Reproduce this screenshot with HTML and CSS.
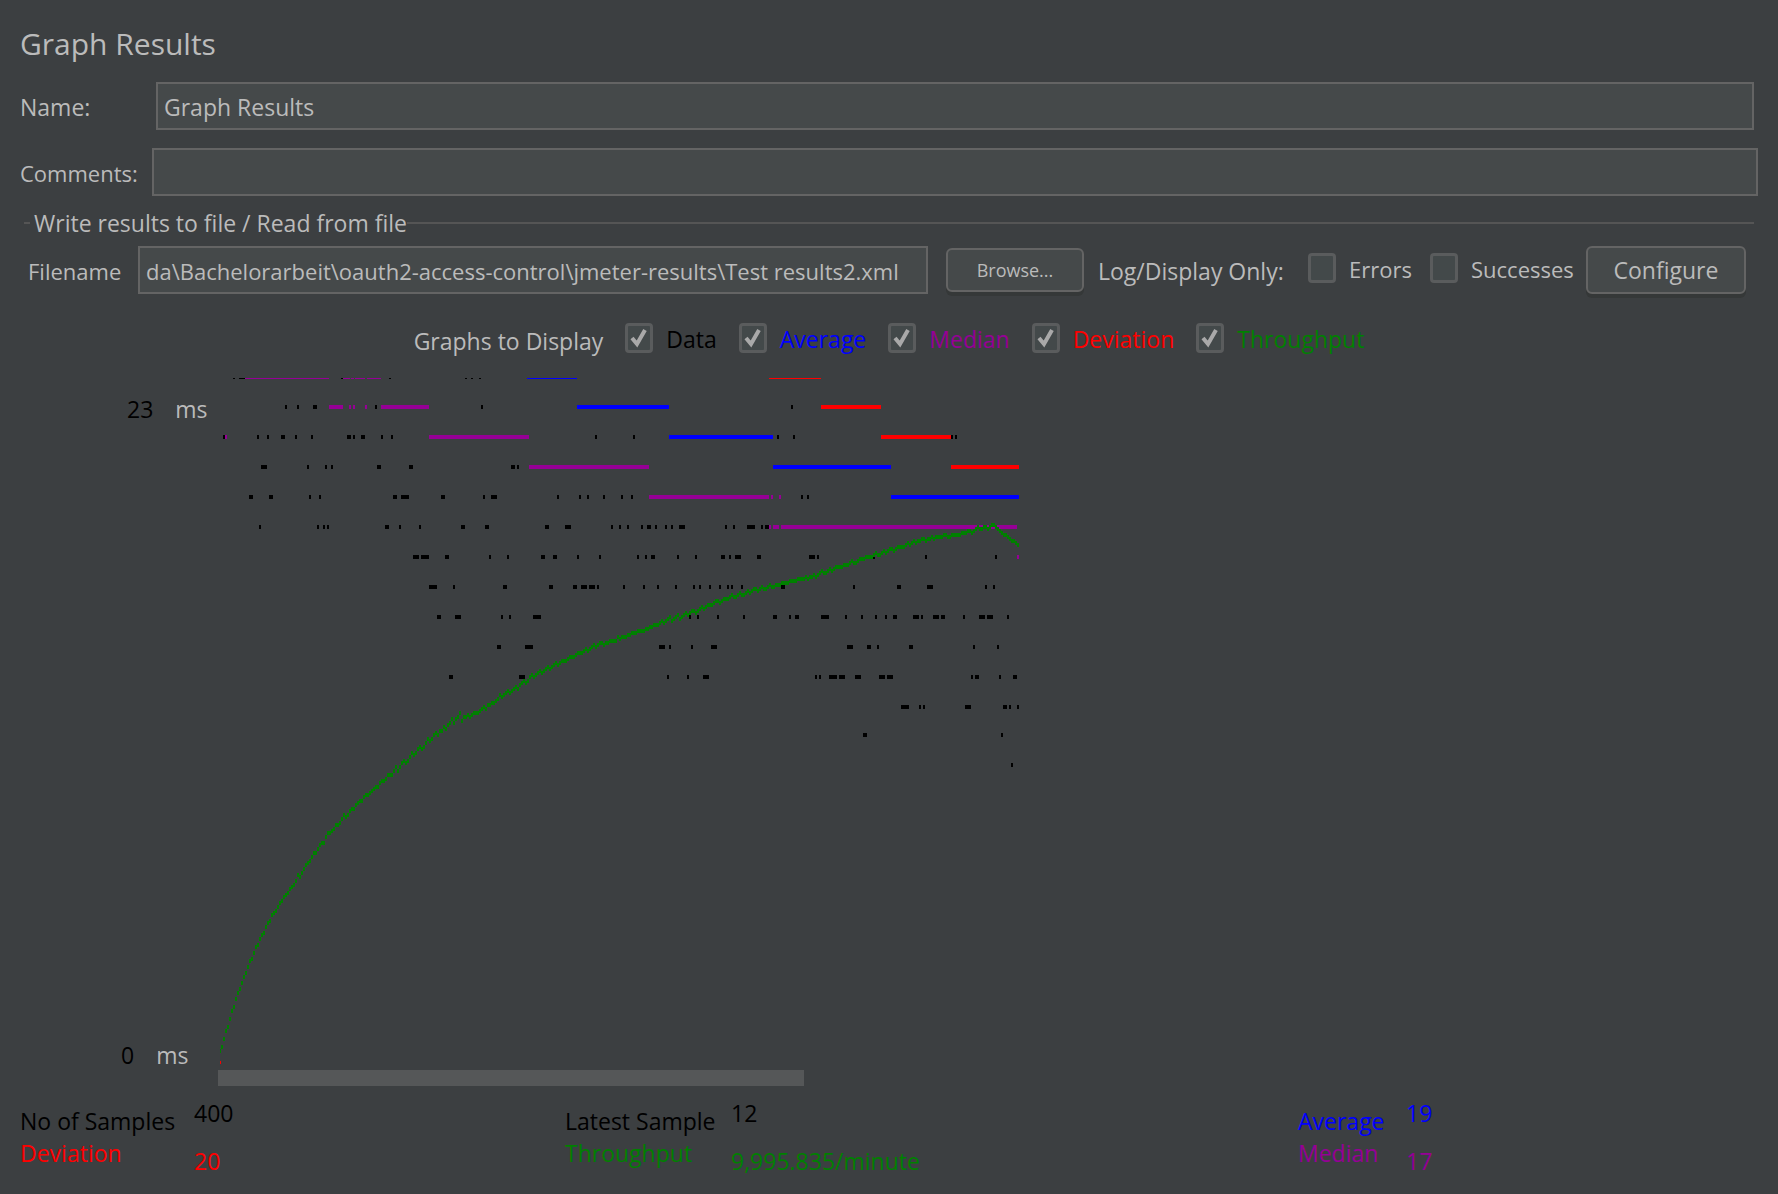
FILE: index.html
```html
<!DOCTYPE html>
<html lang="en">
<head>
<meta charset="utf-8">
<title>Graph Results</title>
<link rel="stylesheet" href="styles.css">
</head>
<body>
<main class="panel">
  <h1 class="title">Graph Results</h1>
  <div class="field-row name-row">
    <label class="label" for="name">Name:</label>
    <input class="text-field" id="name" type="text" value="Graph Results">
  </div>
  <div class="field-row comments-row">
    <label class="label snug" for="comments">Comments:</label>
    <input class="text-field" id="comments" type="text">
  </div>
  <fieldset class="file-group">
    <legend class="file-legend">Write results to file / Read from file</legend>
    <div class="file-row">
      <label class="label snug" for="filename">Filename</label>
      <input class="text-field snug" id="filename" type="text" value="da\Bachelorarbeit\oauth2-access-control\jmeter-results\Test results2.xml">
      <button class="button browse" type="button">Browse...</button>
      <span class="label log-label">Log/Display Only:</span>
      <label class="check snug errors"><input class="box" type="checkbox"><span>Errors</span></label>
      <label class="check snug successes"><input class="box" type="checkbox"><span>Successes</span></label>
      <button class="button configure" type="button">Configure</button>
    </div>
  </fieldset>
  <div class="display-row">
    <span class="label">Graphs to Display</span>
    <label class="check data"><input class="box" type="checkbox" checked><span>Data</span></label>
    <label class="check average"><input class="box" type="checkbox" checked><span>Average</span></label>
    <label class="check median"><input class="box" type="checkbox" checked><span>Median</span></label>
    <label class="check deviation"><input class="box" type="checkbox" checked><span>Deviation</span></label>
    <label class="check throughput"><input class="box" type="checkbox" checked><span>Throughput</span></label>
  </div>
  <section class="graph">
    <div class="axis">
      <div class="tick"><span class="tick-value">23</span><span>ms</span></div>
      <div class="tick"><span class="tick-value">0</span><span>ms</span></div>
    </div>
    <div class="plot">
      <svg class="chart" viewBox="220 378 800 686" width="800" height="686" shape-rendering="crispEdges" fill="none" stroke-width="4" role="img" aria-label="Response times and throughput">
        <g id="data" stroke="#000"></g>
        <g id="median" stroke="#960096"></g>
        <g id="average" stroke="#00f"></g>
        <g id="deviation" stroke="#f00"></g>
        <g id="throughput" stroke="#008000"></g>
      </svg>
      <div class="scrollbar"></div>
    </div>
  </section>
  <dl class="stats">
    <dt class="data">No of Samples</dt><dd class="data">400</dd>
    <dt class="data">Latest Sample</dt><dd class="data">12</dd>
    <dt class="average">Average</dt><dd class="average">19</dd>
    <dt class="low deviation">Deviation</dt><dd class="low deviation">20</dd>
    <dt class="low throughput">Throughput</dt><dd class="low throughput">9,995.835/minute</dd>
    <dt class="low median">Median</dt><dd class="low median">17</dd>
  </dl>
</main>
<script src="chart.js"></script>
</body>
</html>
```
FILE: styles.css
```css
* { box-sizing: border-box; }

body {
  margin: 0;
  background: #3c3f41;
  color: #bbb;
  font: 23px/32px "Open Sans", "Noto Sans", sans-serif;
}

.panel { padding: 22px 20px 0; }

.title {
  margin: 0;
  font-size: 30px;
  line-height: 44px;
  font-weight: 400;
}

.label { flex: none; margin-top: 2px; white-space: nowrap; }

.text-field {
  flex: 1;
  min-width: 0;
  height: 48px;
  padding: 2px 6px 0;
  border: 2px solid #646464;
  border-radius: 0;
  outline: 0;
  background: #45494a;
  color: #bbb;
  font: inherit;
}

.snug { font-size: 22px; }

.field-row { display: flex; align-items: center; }
.name-row { margin: 16px 4px 0 0; }
.name-row .label { width: 136px; }
.comments-row { margin-top: 18px; }
.comments-row .label { width: 132px; }

.file-group {
  min-width: 0;
  margin: 11px 4px 0;
  padding: 7px 0 0;
  border: 0;
  border-top: 2px solid #555;
}

.file-legend { margin-left: 6px; padding: 0 0 0 4px; }

.file-row { display: flex; align-items: center; padding: 0 8px 0 4px; }
.file-row .label { width: 110px; }
.file-row .log-label { width: 210px; }

.button {
  flex: none;
  border: 2px solid #646464;
  border-radius: 6px;
  background: #45494a;
  box-shadow: 0 4px 0 #353838;
  color: #bbb;
  font: inherit;
}

.browse { width: 138px; height: 44px; margin: 0 14px 0 18px; font-size: 18px; }
.configure { width: 160px; height: 48px; }

.check {
  display: flex;
  flex: none;
  gap: 13px;
  margin-bottom: 2px;
}

.errors { width: 122px; }
.successes { width: 156px; }

.box {
  appearance: none;
  flex: none;
  width: 28px;
  height: 30px;
  margin: 0;
  border: 3px solid #5a5c5d;
  border-radius: 4px;
  background: #43494a;
}

.box:checked {
  background: #43494a url("data:image/svg+xml,%3Csvg xmlns='http://www.w3.org/2000/svg' viewBox='0 0 22 24'%3E%3Cpath d='M4 12l5 6 8-14' fill='none' stroke='%23a9a9a9' stroke-width='4'/%3E%3C/svg%3E") center / 22px 24px no-repeat;
}

.display-row {
  display: flex;
  justify-content: center;
  align-items: flex-start;
  gap: 22px;
  margin-top: 29px;
}

.data { color: #000; }
.average { color: #00f; }
.median { color: #960096; }
.deviation { color: #f00; }
.throughput { color: #008000; }

.graph { display: flex; margin-top: 21px; }

.axis {
  display: flex;
  flex: none;
  flex-direction: column;
  justify-content: space-between;
  width: 200px;
  padding: 15px 0 15px 101px;
}

.tick { display: flex; gap: 22px; }
.tick-value { color: #000; }
.tick:first-child { padding-left: 6px; }

.plot { flex: 1; min-width: 0; }
.chart { display: block; }
.scrollbar { width: 586px; height: 16px; margin: 6px 0 0 -2px; background: #555758; }

.stats {
  display: grid;
  grid-template-columns: 174px 371px 166px 567px 108px 1fr;
  grid-auto-rows: 40px;
  margin: 11px 0 0;
}

.stats dt { padding-top: 8px; }
.stats dd { margin: 0; }
.stats dt.low { padding-top: 0; }
.stats dd.low { padding-top: 8px; }
```
FILE: chart.js
```js
// Each row is [y, runs]; a run is a start x, or [x, width] when wider than one sample.
const runs = {
  data: [
    [377, [233, [239, 6], 341, 389, 465, 471, 479]],
    [407, [285, 297, [313, 4], 375, 481, 791]],
    [437, [223, 257, 267, [281, 4], 295, 311, [347, 4], 353, [361, 4], 381, 391, 595, 633, 777, 793, 951, 955]],
    [467, [[261, 6], 307, 325, 331, [377, 4], [409, 4], [511, 4], 517]],
    [497, [[249, 4], [269, 4], 309, 319, [393, 4], [401, 8], [441, 4], 483, [491, 6], 557, 579, 587, 603, 621, 631, 801, 807]],
    [527, [259, 317, 323, 327, [385, 4], 399, 419, [461, 4], [485, 4], [545, 4], [565, 6], 611, 619, 627, 641, [647, 4], 655, 665, 671, [679, 6], 725, 733, [747, 8], 761, [765, 4]]],
    [557, [[413, 6], [421, 8], [445, 4], 489, 507, [541, 4], [553, 4], 577, 599, 637, 645, [651, 4], 677, 695, [721, 4], 729, [735, 6], [757, 4], [809, 6], 817, 873, 925, 995]],
    [587, [[429, 8], 453, [503, 4], [549, 4], [573, 4], [581, 6], [589, 6], 597, 623, 643, 657, 675, 693, 699, 709, 719, 727, 731, 741, [781, 4], 853, [897, 4], [927, 6], 985, 993]],
    [617, [[437, 4], [455, 6], 501, 509, [533, 8], 689, 697, 717, 743, [773, 4], 789, [795, 4], [821, 8], 845, 861, 875, 885, [893, 4], [913, 6], 921, [933, 6], [941, 4], 963, [979, 6], [987, 6], 1007]],
    [647, [[497, 4], [525, 8], [659, 6], 669, 691, [711, 6], [847, 6], [867, 4], 877, [909, 4], 973, 997]],
    [677, [[449, 4], [519, 6], 667, 687, [703, 6], 815, 819, [829, 8], [839, 6], [855, 6], [879, 6], [887, 6], 971, [975, 4], 999, [1013, 4]]],
    [707, [[901, 8], 919, 923, [965, 6], [1003, 4], 1009, 1017]],
    [735, [[863, 4], 1001]],
    [765, [1011]]
  ],
  median: [
    [377, [[245, 84], [343, 7], [351, 3], [355, 10], [367, 14]]],
    [407, [[329, 14], 349, 353, 365, [381, 48]]],
    [437, [225, [429, 100]]],
    [467, [[529, 120]]],
    [497, [[649, 120], 771, 779]],
    [527, [769, [773, 6], [781, 236]]],
    [557, [1017]]
  ],
  average: [[377, [[527, 50]]], [407, [[577, 92]]], [437, [[669, 104]]], [467, [[773, 118]]], [497, [[891, 128]]]],
  deviation: [[377, [[769, 52]]], [407, [[821, 60]]], [437, [[881, 70]]], [467, [[951, 68]]], [1063, [219]]]
};

// One throughput value per sample, two units apart.
const throughput = [
  1051, 1047, 1039, 1031, 1027, 1019, 1011, 1007, 999, 993, 989, 983, 977, 973, 967, 961, 959, 953, 947, 945,
  939, 935, 933, 927, 923, 921, 915, 913, 911, 907, 903, 901, 897, 895, 893, 889, 887, 885, 881, 875,
  877, 873, 869, 865, 863, 861, 857, 853, 853, 849, 845, 843, 843, 837, 833, 833, 831, 829, 825, 825,
  823, 819, 815, 817, 815, 811, 809, 809, 805, 803, 801, 801, 797, 795, 795, 793, 791, 789, 787, 787,
  783, 781, 781, 779, 775, 775, 775, 771, 767, 771, 767, 763, 761, 763, 761, 757, 753, 755, 753, 749,
  747, 749, 747, 743, 739, 741, 739, 735, 733, 735, 731, 731, 727, 729, 725, 723, 719, 723, 719, 717,
  713, 721, 717, 717, 715, 717, 715, 713, 713, 713, 711, 709, 707, 709, 705, 705, 703, 703, 701, 699,
  695, 697, 695, 693, 691, 693, 691, 689, 687, 689, 685, 683, 681, 683, 681, 677, 675, 677, 675, 673,
  671, 673, 671, 669, 667, 669, 667, 665, 663, 665, 663, 661, 661, 661, 659, 657, 657, 657, 655, 653,
  653, 653, 651, 649, 651, 649, 647, 645, 647, 645, 643, 643, 645, 643, 643, 641, 641, 641, 641, 637,
  639, 637, 637, 637, 635, 635, 633, 633, 633, 631, 631, 631, 631, 629, 629, 627, 627, 625, 625, 625,
  623, 621, 623, 621, 619, 617, 621, 619, 617, 615, 619, 617, 615, 613, 615, 613, 611, 611, 613, 611,
  609, 607, 609, 607, 605, 605, 605, 603, 601, 601, 603, 601, 599, 599, 599, 597, 595, 597, 597, 595,
  593, 595, 595, 593, 591, 593, 591, 589, 589, 591, 589, 587, 589, 589, 587, 585, 587, 587, 585, 585,
  585, 583, 583, 583, 583, 581, 581, 581, 581, 579, 579, 579, 579, 577, 579, 577, 577, 575, 577, 575,
  573, 571, 573, 573, 571, 569, 571, 569, 567, 567, 567, 567, 565, 565, 565, 563, 561, 563, 563, 561,
  559, 559, 559, 557, 557, 557, 557, 555, 553, 555, 555, 553, 551, 553, 551, 549, 549, 551, 549, 547,
  547, 547, 547, 545, 543, 545, 543, 541, 543, 541, 541, 539, 539, 541, 539, 539, 537, 539, 537, 537,
  537, 537, 535, 535, 537, 537, 535, 535, 535, 535, 535, 533, 533, 533, 531, 531, 533, 531, 529, 527,
  529, 529, 527, 527, 529, 527, 525, 525, 527, 529, 531, 533, 535, 535, 537, 539, 541, 541, 543, 545
];

function addPath(id, d) {
  const path = document.createElementNS("http://www.w3.org/2000/svg", "path");
  path.setAttribute("d", d);
  document.getElementById(id).append(path);
}

for (const [id, rows] of Object.entries(runs)) {
  addPath(id, rows.map(([y, marks]) =>
    marks.map(mark => {
      const [x, width] = Array.isArray(mark) ? mark : [mark, 2];
      return `M${x} ${y}h${width}`;
    }).join("")
  ).join(""));
}

addPath("throughput", throughput.map((y, i) => `M${219 + 2 * i} ${y}h2`).join(""));
```
